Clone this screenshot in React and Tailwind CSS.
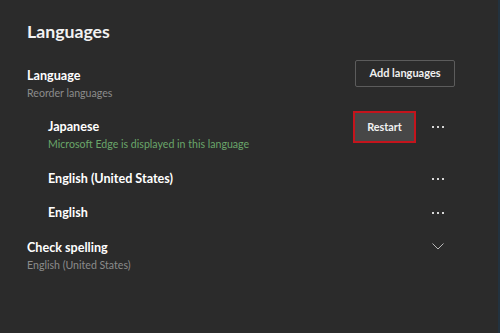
const font = { fontFamily: 'Lato, "Noto Sans", sans-serif' }

function Dots() {
  return (
    <div className="flex w-[24px] items-center justify-center gap-[3px]">
      <span className="h-[2px] w-[2px] bg-[#d6d6d6]" />
      <span className="h-[2px] w-[2px] bg-[#d6d6d6]" />
      <span className="h-[2px] w-[2px] bg-[#d6d6d6]" />
    </div>
  )
}

function Chevron() {
  return (
    <div className="flex w-[24px] justify-center">
      <svg width="12" height="7" viewBox="0 0 12 7" fill="none">
        <path d="M0.5 0.5 L6 6 L11.5 0.5" stroke="#b8b8b8" strokeWidth="1" />
      </svg>
    </div>
  )
}

export default function App() {
  return (
    <div
      className="h-[333px] w-[500px] overflow-hidden border-r-2 border-[#22323f] bg-[#2b2b2b] text-white"
      style={font}
    >
      <h1 className="pl-[27px] pt-[20px] text-[17.7px] font-bold leading-[24px] text-[#f2f2f2]">
        Languages
      </h1>

      <div className="mt-[16px] flex items-start justify-between pl-[27px] pr-[43px]">
        <div className="pt-[7px]">
          <div className="text-[12.6px] font-bold leading-[18px]">Language</div>
          <div className="text-[10.6px] leading-[16px] text-[#8c8c8c]">Reorder languages</div>
        </div>
        <button className="h-[27px] w-[100px] rounded-[2px] border border-[#5c5c5c] text-[11px] font-bold text-[#f0f0f0]">
          Add languages
        </button>
      </div>

      <div className="mt-[10px] flex items-start justify-between pl-[48px] pr-[48px]">
        <div className="pt-[7px]">
          <div className="text-[12.6px] font-bold leading-[18px]">Japanese</div>
          <div className="text-[10.6px] leading-[16px] text-[#6aa66a]">
            Microsoft Edge is displayed in this language
          </div>
        </div>
        <div className="flex h-[32px] items-center gap-[10px]">
          <button className="h-[32px] w-[63px] border-2 border-[#c4141c] bg-[#474747] text-[10.8px] font-bold text-[#f2f2f2]">
            Restart
          </button>
          <Dots />
        </div>
      </div>

      <div className="mt-[15px] flex h-[24px] items-center justify-between pl-[48px] pr-[48px]">
        <div className="text-[12.6px] font-bold leading-[18px]">English (United States)</div>
        <Dots />
      </div>

      <div className="mt-[10px] flex h-[24px] items-center justify-between pl-[48px] pr-[48px]">
        <div className="text-[12.6px] font-bold leading-[18px]">English</div>
        <Dots />
      </div>

      <div className="mt-[14px] flex items-start justify-between pl-[27px] pr-[48px]">
        <div>
          <div className="text-[12.6px] font-bold leading-[18px]">Check spelling</div>
          <div className="text-[10.6px] leading-[16px] text-[#8c8c8c]">English (United States)</div>
        </div>
        <div className="pt-[4px]">
          <Chevron />
        </div>
      </div>
    </div>
  )
}
